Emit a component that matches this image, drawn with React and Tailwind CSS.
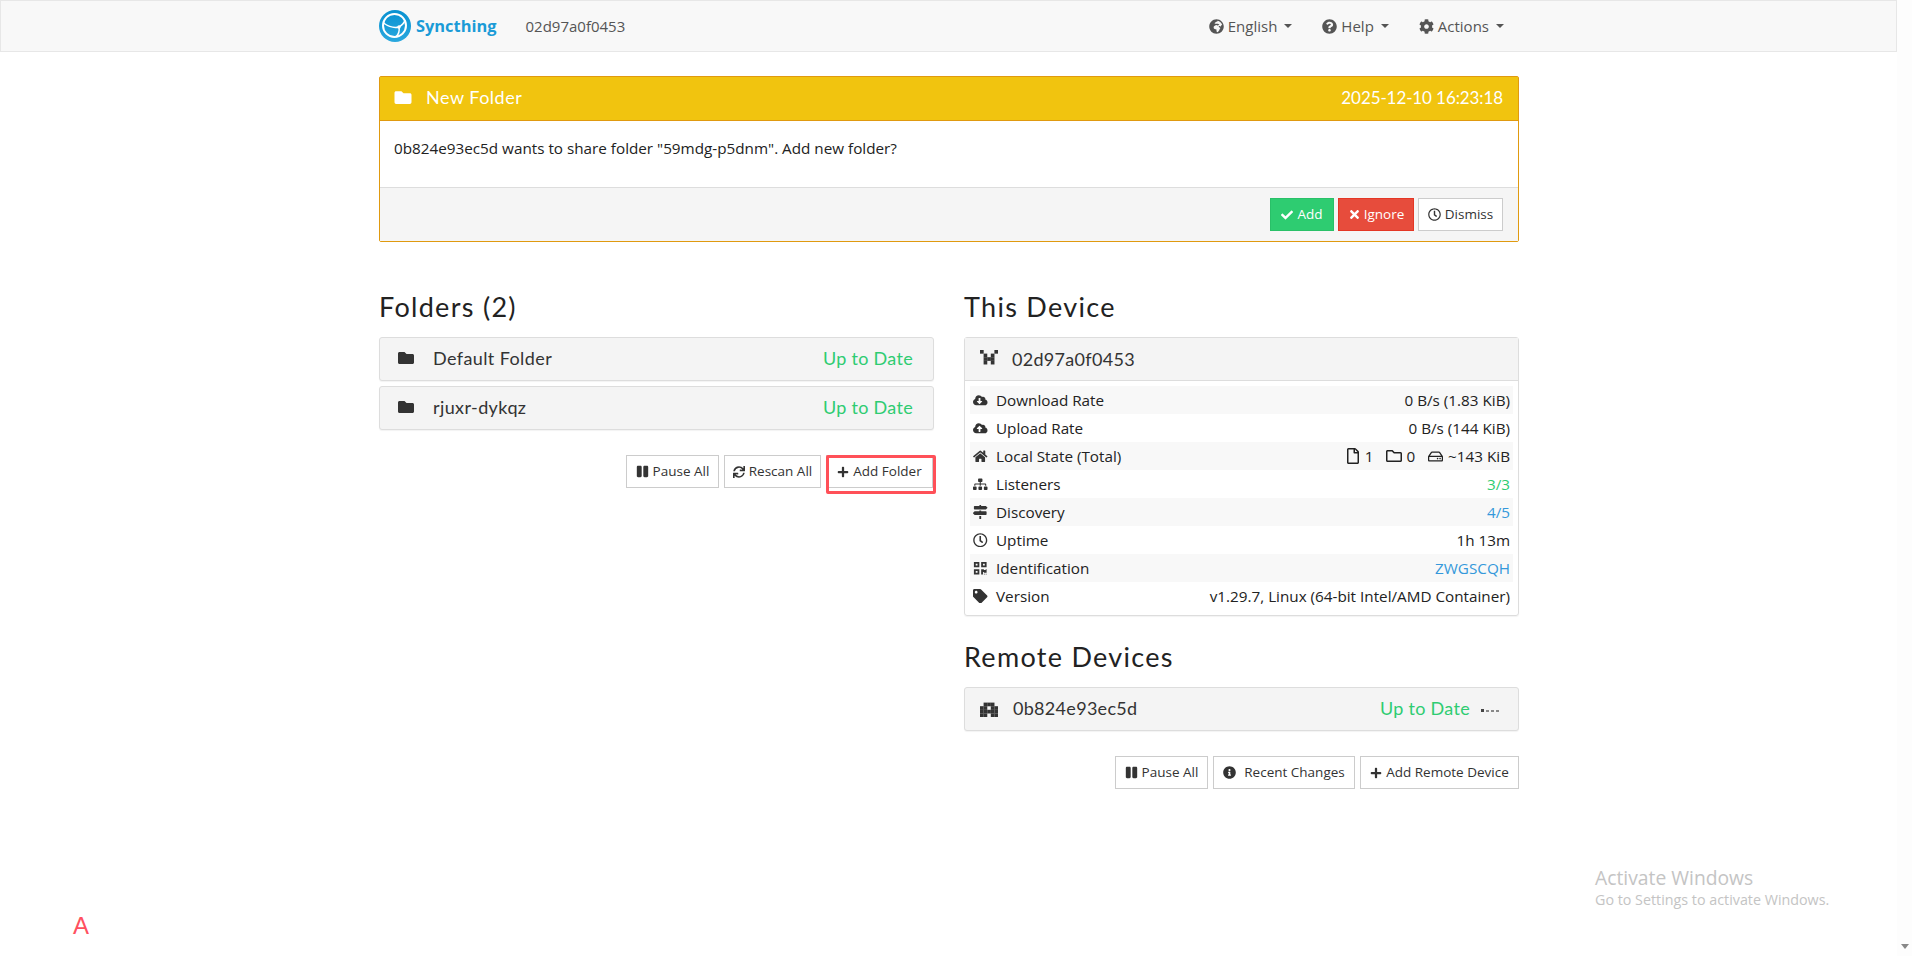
import React from "react";
import {
  FaCheck,
  FaCloudDownloadAlt,
  FaCloudUploadAlt,
  FaCog,
  FaFolder,
  FaGlobeAfrica,
  FaHome,
  FaInfoCircle,
  FaMapSigns,
  FaPause,
  FaPlus,
  FaQrcode,
  FaQuestionCircle,
  FaRegClock,
  FaRegFile,
  FaRegFolder,
  FaRegHdd,
  FaSitemap,
  FaSync,
  FaTag,
  FaTimes,
} from "react-icons/fa";

const body = "font-['Open_Sans',sans-serif]";
const head = "font-['Lato',sans-serif]";

function Logo() {
  return (
    <svg viewBox="0 0 32 32" className="w-8 h-8 shrink-0">
      <defs>
        <linearGradient id="logoBlue" x1="0" y1="0" x2="0" y2="1">
          <stop offset="0" stopColor="#0891d1" />
          <stop offset="1" stopColor="#2aa8de" />
        </linearGradient>
      </defs>
      <circle cx="16" cy="16" r="16" fill="url(#logoBlue)" />
      <circle cx="15.5" cy="15.5" r="11.5" fill="none" stroke="#fff" strokeWidth="2" />
      <path d="M4.5 13 Q13 19 20 17 M20 17 Q25 14 26 10 M20 17 Q21 23 17 27" stroke="#fff" strokeWidth="1.5" fill="none" />
      <circle cx="20" cy="17" r="1.7" fill="#fff" />
    </svg>
  );
}

// little pixel avatar syncthing draws for a device
function Identicon({ cells }) {
  return (
    <svg viewBox="0 0 5 5" className="w-[18px] h-[18px] shrink-0">
      {cells.map(([x, y]) => (
        <rect key={x + "-" + y} x={x} y={y} width="1.02" height="1.02" fill="#333" />
      ))}
    </svg>
  );
}

const thisDevice = [
  [0, 0], [4, 0],
  [1, 1], [3, 1],
  [1, 2], [2, 2], [3, 2],
  [1, 3], [3, 3],
];
const remoteDevice = [
  [1, 1], [2, 1], [3, 1],
  [0, 2], [1, 2], [3, 2], [4, 2],
  [0, 3], [1, 3], [2, 3], [3, 3], [4, 3],
  [0, 4], [1, 4], [3, 4], [4, 4],
];

function Btn({ icon, children, className = "" }) {
  return (
    <button className={"h-[33px] flex items-center justify-center gap-[4px] border border-[#ccc] bg-white text-[#333] text-[13.5px] " + className}>
      {icon}
      <span>{children}</span>
    </button>
  );
}

function NavItem({ icon, label }) {
  return (
    <div className="flex items-center gap-[4px] text-[#555] text-[15px]">
      <span className="text-[15px]">{icon}</span>
      <span>{label}</span>
      <span className="ml-[3px] w-0 h-0 border-x-[4px] border-x-transparent border-t-[4px] border-t-[#555]" />
    </div>
  );
}

function FolderRow({ name }) {
  return (
    <div className={head + " h-[44px] pb-[2px] flex items-center pl-[18px] pr-[20px] bg-[#f4f4f4] border border-[#ddd] rounded-[3px] shadow-[0_1px_1px_rgba(0,0,0,0.05)] text-[18px] tracking-[0.4px]"}>
      <FaFolder className="text-[#333] text-[16px] w-[16px] mr-[19px]" />
      <span className="text-[#333] flex-1">{name}</span>
      <span className="text-[#2ecc71] text-[18px] tracking-[0.3px]">Up to Date</span>
    </div>
  );
}

const rows = [
  [<FaCloudDownloadAlt />, "Download Rate", "0 B/s (1.83 KiB)"],
  [<FaCloudUploadAlt />, "Upload Rate", "0 B/s (144 KiB)"],
  [
    <FaHome />,
    "Local State (Total)",
    <span className="flex items-center">
      <FaRegFile className="text-[16px] mr-[4px]" />1
      <FaRegFolder className="text-[16px] ml-[13px] mr-[4px]" />0
      <FaRegHdd className="text-[15px] ml-[13px] mr-[5px]" />~143 KiB
    </span>,
  ],
  [<FaSitemap />, "Listeners", <span className="text-[#2ecc71]">3/3</span>],
  [<FaMapSigns />, "Discovery", <span className="text-[#3498db]">4/5</span>],
  [<FaRegClock />, "Uptime", "1h 13m"],
  [<FaQrcode />, "Identification", <span className="text-[#3498db]">ZWGSCQH</span>],
  [<FaTag />, "Version", "v1.29.7, Linux (64-bit Intel/AMD Container)"],
];

const headingCls = head + " text-[27px] leading-[37px] tracking-[1.3px] text-[#222]";

export default function App() {
  return (
    <div className={body + " h-screen overflow-hidden flex bg-white text-[#222] relative"}>
      <div className="flex-1 min-w-0">
        <nav className="h-[52px] bg-[#f8f8f8] border border-[#e7e7e7] flex items-center pl-[378px] pr-[27px]">
          <Logo />
          <span className="ml-[5px] text-[16.4px] font-bold text-[#1b9bd7]">Syncthing</span>
          <span className="ml-[29px] text-[15px] text-[#555]">02d97a0f0453</span>
          <div className="flex-1" />
          <div className="flex gap-[30px] pr-[365px]">
            <NavItem icon={<FaGlobeAfrica />} label="English" />
            <NavItem icon={<FaQuestionCircle />} label="Help" />
            <NavItem icon={<FaCog />} label="Actions" />
          </div>
        </nav>

        <div className="w-[1140px] ml-[379px]">
          <section className="mt-[24px] h-[166px] border border-[#e09a0f] rounded-[2px] flex flex-col">
            <div className={head + " h-[44px] pb-[2px] bg-[#f1c40f] border-b border-[#e09a0f] flex items-center pl-[14px] pr-[15px] text-white text-[18px] tracking-[0.5px]"}>
              <FaFolder className="text-[17px] w-[18px] mr-[14px]" />
              <span className="flex-1">New Folder</span>
              <span className="text-[17px] tracking-[-0.1px]">2025-12-10 16:23:18</span>
            </div>
            <p className="flex-1 pl-[14px] pt-[17px] text-[15.25px] leading-[20px]">
              0b824e93ec5d wants to share folder "59mdg-p5dnm". Add new folder?
            </p>
            <div className="h-[54px] bg-[#f5f5f5] border-t border-[#ddd] flex items-center justify-end gap-[4px] pr-[15px]">
              <Btn icon={<FaCheck className="text-[12px]" />} className="w-[64px] !bg-[#2ecc71] !border-[#29c068] !text-white">Add</Btn>
              <Btn icon={<FaTimes className="text-[13px]" />} className="w-[76px] !gap-[3px] !bg-[#e74c3c] !border-[#e43725] !text-white">Ignore</Btn>
              <Btn icon={<FaRegClock className="text-[13px]" />} className="w-[85px]">Dismiss</Btn>
            </div>
          </section>

          <div className="grid grid-cols-2 gap-[30px] mt-[46px]">
            <div>
              <h3 className={headingCls}>Folders (2)</h3>
              <div className="mt-[12px] flex flex-col gap-[5px]">
                <FolderRow name="Default Folder" />
                <FolderRow name="rjuxr-dykqz" />
              </div>
              <div className="mt-[25px] pr-[1px] flex justify-end gap-[5px]">
                <Btn icon={<FaPause className="text-[13px]" />} className="w-[93px]">Pause All</Btn>
                <Btn icon={<FaSync className="text-[12px]" />} className="w-[97px]">Rescan All</Btn>
                <Btn icon={<FaPlus className="text-[12px]" />} className="w-[107px]">Add Folder</Btn>
              </div>
            </div>

            <div>
              <h3 className={headingCls}>This Device</h3>
              <div className="mt-[12px] border border-[#ddd] rounded-[3px] shadow-[0_1px_1px_rgba(0,0,0,0.05)]">
                <div className={head + " h-[43px] bg-[#f4f4f4] border-b border-[#ddd] flex items-center pl-[15px] text-[18px] tracking-[0.3px] text-[#333]"}>
                  <Identicon cells={thisDevice} />
                  <span className="ml-[14px]">02d97a0f0453</span>
                </div>
                <div className="px-[5px] pt-[5px] pb-[5px]">
                  {rows.map(([icon, label, value], i) => (
                    <div key={label} className={"h-[28px] flex items-center justify-between pr-[3px] text-[15.25px] " + (i % 2 === 0 ? "bg-[#f8f8f8]" : "")}>
                      <span className="flex items-center">
                        <span className="w-[20px] pl-[1px] flex justify-center text-[#333] text-[14.5px]">{icon}</span>
                        <span className="ml-[6px]">{label}</span>
                      </span>
                      <span>{value}</span>
                    </div>
                  ))}
                </div>
              </div>

              <h3 className={headingCls + " mt-[22px]"}>Remote Devices</h3>
              <div className={head + " mt-[12px] h-[44px] pb-[2px] flex items-center pl-[15px] pr-[19px] bg-[#f4f4f4] border border-[#ddd] rounded-[3px] shadow-[0_1px_1px_rgba(0,0,0,0.05)] text-[18px] tracking-[0.3px] text-[#333]"}>
                <Identicon cells={remoteDevice} />
                <span className="ml-[15px] flex-1">0b824e93ec5d</span>
                <span className="text-[#2ecc71] text-[18px]">Up to Date</span>
                <span className="ml-[11px] w-[18px] flex items-end gap-[2px] h-[4px] mt-[4px]">
                  <i className="block w-[3px] h-[3px] bg-[#444]" />
                  <i className="block w-[3px] h-[2px] bg-[#888]" />
                  <i className="block w-[3px] h-[2px] bg-[#888]" />
                  <i className="block w-[3px] h-[2px] bg-[#888]" />
                </span>
              </div>
              <div className="mt-[25px] flex justify-end gap-[5px]">
                <Btn icon={<FaPause className="text-[13px]" />} className="w-[93px]">Pause All</Btn>
                <Btn icon={<FaInfoCircle className="text-[13px] mr-[4px]" />} className="w-[142px]">Recent Changes</Btn>
                <Btn icon={<FaPlus className="text-[12px]" />} className="w-[159px]">Add Remote Device</Btn>
              </div>
            </div>
          </div>
        </div>
      </div>

      {/* windows scrollbar */}
      <div className="w-[15px] bg-[#fdfdfd] flex flex-col justify-end items-center pb-[7px]">
        <span className="w-0 h-0 border-x-[4px] border-x-transparent border-t-[5px] border-t-[#888]" />
      </div>

      {/* annotation and watermark drawn over the page */}
      <div className="absolute left-[826px] top-[455px] w-[110px] h-[39px] border-[3px] border-[#ff5058] rounded-[2px]" />
      <span className="absolute left-[73px] top-[912px] text-[#ff5060] text-[24px] leading-[28px] font-['Liberation_Sans',sans-serif]">A</span>
      <div className="absolute left-[1595px] top-[866px] text-[#c4c4c4]">
        <div className="text-[19.3px] leading-[24px]">Activate Windows</div>
        <div className="text-[14.3px] leading-[20px]">Go to Settings to activate Windows.</div>
      </div>
    </div>
  );
}
